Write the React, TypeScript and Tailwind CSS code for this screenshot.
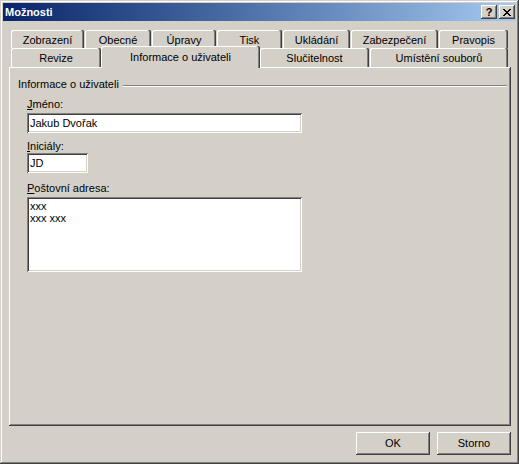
import React from 'react'

const raised =
  'shadow-[inset_-1px_-1px_#404040,inset_1px_1px_#ffffff,inset_-2px_-2px_#808080,inset_2px_2px_#d4d0c8]'
const sunken =
  'shadow-[inset_1px_1px_#808080,inset_-1px_-1px_#ffffff,inset_2px_2px_#404040,inset_-2px_-2px_#d4d0c8]'
const tabEdge =
  'shadow-[inset_-1px_0_#404040,inset_-2px_0_#808080,inset_1px_1px_#ffffff]'

const topTabs: [string, number][] = [
  ['Zobrazení', 73],
  ['Obecné', 66],
  ['Úpravy', 64],
  ['Tisk', 65],
  ['Ukládání', 67],
  ['Zabezpečení', 87],
  ['Pravopis', 69],
]

function Tab({ label, width, className = '' }: { label: string; width: number; className?: string }) {
  return (
    <div
      className={`h-full flex items-center justify-center rounded-t-[2px] pt-[2px] ${tabEdge} ${className}`}
      style={{ width }}
    >
      {label}
    </div>
  )
}

function Label({ access, rest }: { access: string; rest: string }) {
  return (
    <div className="h-[13px] leading-[13px]">
      <span className="underline underline-offset-[1px]">{access}</span>
      {rest}
    </div>
  )
}

export default function App() {
  return (
    <div className="w-[519px] h-[464px] bg-[#d4d0c8] p-[3px] flex flex-col font-['Liberation_Sans',Tahoma,sans-serif] text-[11px] text-black shadow-[inset_-1px_-1px_#404040,inset_1px_1px_#d4d0c8,inset_-2px_-2px_#808080,inset_2px_2px_#ffffff]">
      {/* Title bar */}
      <div className="h-[18px] flex items-center bg-linear-to-r from-[#0a246a] to-[#a6caf0] pl-[2px] pr-[1px]">
        <span className="flex-1 font-bold text-white text-[11px] leading-none">Možnosti</span>
        <div
          className={`w-[16px] h-[14px] bg-[#d4d0c8] flex items-center justify-center font-bold text-[11px] leading-none ${raised}`}
        >
          ?
        </div>
        <div className={`w-[16px] h-[14px] ml-[2px] bg-[#d4d0c8] flex items-center justify-center ${raised}`}>
          <svg width="8" height="7" viewBox="0 0 8 7" shapeRendering="crispEdges">
            <path d="M0 0h2v1H0zM6 0h2v1H6zM1 1h2v1H1zM5 1h2v1H5zM2 2h4v1H2zM3 3h2v1H3zM2 4h4v1H2zM1 5h2v1H1zM5 5h2v1H5zM0 6h2v1H0zM6 6h2v1H6z" fill="#000" />
          </svg>
        </div>
      </div>

      <div className="flex flex-col pl-[6px] pr-[5px] pt-[9px]">
        {/* Back row of tabs */}
        <div className="ml-[2px] h-[18px] flex gap-px">
          {topTabs.map(([t, w]) => (
            <Tab key={t} label={t} width={w} />
          ))}
        </div>

        {/* Front row of tabs */}
        <div className="ml-[2px] h-[19px] flex">
          <Tab label="Revize" width={90} />
          <div
            className={`relative z-10 -mt-[2px] h-[22px] w-[159px] bg-[#d4d0c8] flex items-center justify-center rounded-t-[2px] ${tabEdge}`}
          >
            Informace o uživateli
          </div>
          <Tab label="Slučitelnost" width={109} />
          <Tab label="Umístění souborů" width={138} className="ml-px" />
        </div>

        {/* Panel */}
        <div className="h-[359px] pt-[11px] pl-[9px] pr-[4px] shadow-[inset_-1px_-1px_#404040,inset_1px_1px_#ffffff,inset_-2px_-2px_#808080]">
          <div className="flex items-center h-[13px]">
            <span className="leading-[13px]">Informace o uživateli</span>
            <div className="flex-1 ml-[4px] h-0 border-t border-b border-t-[#808080] border-b-white mt-[2px]" />
          </div>

          <div className="pl-[9px] flex flex-col">
            <div className="mt-[7px]">
              <Label access="J" rest="méno:" />
            </div>
            <div className={`mt-[2px] w-[275px] h-[20px] bg-white pl-[3px] flex items-center ${sunken}`}>
              Jakub Dvořak
            </div>

            <div className="mt-[7px]">
              <Label access="I" rest="niciály:" />
            </div>
            <div className={`w-[61px] h-[20px] bg-white pl-[3px] flex items-center ${sunken}`}>JD</div>

            <div className="mt-[9px]">
              <Label access="P" rest="oštovní adresa:" />
            </div>
            <div className={`mt-[2px] w-[275px] h-[75px] bg-white pl-[3px] pt-[3px] leading-[12px] ${sunken}`}>
              <div>xxx</div>
              <div>xxx xxx</div>
            </div>
          </div>
        </div>

        {/* Buttons */}
        <div className="mt-[6px] flex justify-end gap-[7px]">
          <button className={`w-[74px] h-[23px] bg-[#d4d0c8] flex items-center justify-center ${raised}`}>OK</button>
          <button className={`w-[74px] h-[23px] bg-[#d4d0c8] flex items-center justify-center ${raised}`}>Storno</button>
        </div>
      </div>
    </div>
  )
}
